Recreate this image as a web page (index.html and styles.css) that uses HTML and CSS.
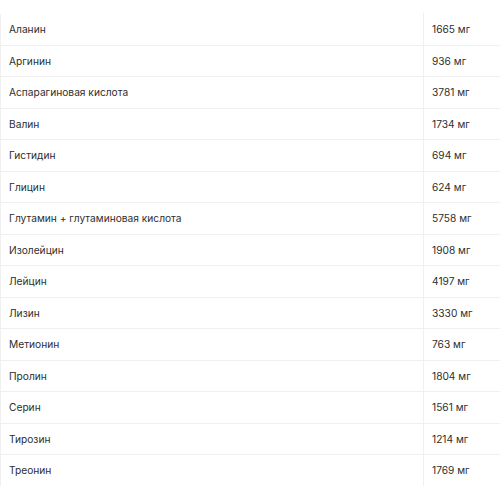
FILE: index.html
```html
<!DOCTYPE html>
<html lang="ru">
<head>
<meta charset="utf-8">
<link rel="stylesheet" href="styles.css">
</head>
<body>
<table class="amino">
<tbody>
<tr><td class="name">Аланин</td><td class="val">1665 мг</td></tr>
<tr><td class="name">Аргинин</td><td class="val">936 мг</td></tr>
<tr><td class="name">Аспарагиновая кислота</td><td class="val">3781 мг</td></tr>
<tr><td class="name">Валин</td><td class="val">1734 мг</td></tr>
<tr><td class="name">Гистидин</td><td class="val">694 мг</td></tr>
<tr><td class="name">Глицин</td><td class="val">624 мг</td></tr>
<tr><td class="name">Глутамин + глутаминовая кислота</td><td class="val">5758 мг</td></tr>
<tr><td class="name">Изолейцин</td><td class="val">1908 мг</td></tr>
<tr><td class="name">Лейцин</td><td class="val">4197 мг</td></tr>
<tr><td class="name">Лизин</td><td class="val">3330 мг</td></tr>
<tr><td class="name">Метионин</td><td class="val">763 мг</td></tr>
<tr><td class="name">Пролин</td><td class="val">1804 мг</td></tr>
<tr><td class="name">Серин</td><td class="val">1561 мг</td></tr>
<tr><td class="name">Тирозин</td><td class="val">1214 мг</td></tr>
<tr><td class="name">Треонин</td><td class="val">1769 мг</td></tr>
</tbody>
</table>
</body>
</html>
```
FILE: styles.css
```css
html, body {
  margin: 0;
  padding: 0;
  background: #fff;
}
body {
  padding-top: 13px;
  font-family: Inter, "Noto Sans", sans-serif;
  font-size: 10.2px;
  color: #2e2e2e;
}
.amino {
  border-collapse: collapse;
  width: 500px;
  table-layout: fixed;
}
.amino tr {
  height: 31.5px;
}
.amino td {
  border: 1px solid #f0f0f0;
  padding: 0 8px;
  vertical-align: middle;
  white-space: nowrap;
}
.amino tr:first-child td {
  border-top-color: #fff;
}
.amino tr:last-child td {
  border-bottom-color: #fff;
}
.amino td:last-child {
  border-right-color: #fff;
}
.amino .name {
  width: 406px;
}
.amino .val {
  width: auto;
}
```
